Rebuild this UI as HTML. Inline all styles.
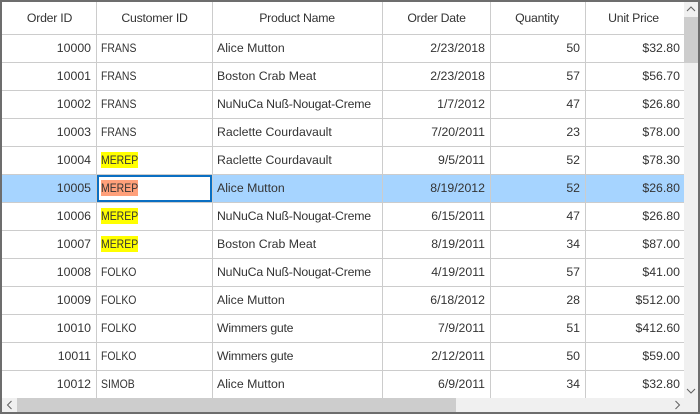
<!DOCTYPE html>
<html><head><meta charset="utf-8">
<style>
html,body{margin:0;padding:0;width:700px;height:414px;overflow:hidden;background:#fff}
#g{position:relative;width:700px;height:414px;font-family:"Liberation Sans",sans-serif;font-size:12.3px;color:#333;overflow:hidden}
#g div{position:absolute;white-space:nowrap}
.h{top:2px;height:32px;line-height:32px;text-align:center;letter-spacing:-.25px}
.l{left:2px;width:682px;height:1px;background:#cccccc}
.v{top:2px;width:1px;height:396px;background:#cccccc}
.r{height:27px;line-height:27px}
.a{text-align:right}
.c1{left:2px;width:89px}.c2{left:101px;transform:scaleX(.85);transform-origin:0 50%}.c3{left:217px}
.c4{left:383px;width:102px}.c5{left:491px;width:89px}.c6{left:586px;width:94px}
.n{letter-spacing:-.2px}.w{letter-spacing:-.25px}
.y{left:101px;width:37px;height:16px;background:#ffff00}
svg{position:absolute;left:0;top:0}
</style></head><body><div id="g">
<div style="left:2px;top:175px;width:682px;height:27px;background:#a6d4ff"></div>
<div class="l" style="top:34px"></div><div class="l" style="top:62px"></div><div class="l" style="top:90px"></div><div class="l" style="top:118px"></div><div class="l" style="top:146px"></div><div class="l" style="top:174px"></div><div class="l" style="top:202px"></div><div class="l" style="top:230px"></div><div class="l" style="top:258px"></div><div class="l" style="top:286px"></div><div class="l" style="top:314px"></div><div class="l" style="top:342px"></div><div class="l" style="top:370px"></div>
<div class="v" style="left:96px"></div><div class="v" style="left:212px"></div><div class="v" style="left:382px"></div><div class="v" style="left:490px"></div><div class="v" style="left:585px"></div>
<div style="left:97px;top:175px;width:111px;height:23px;border:2px solid #0a6fc2;background:#fff"></div>
<div class="y" style="top:152px"></div>
<div class="y" style="top:180px;background:#ffa07a"></div>
<div class="y" style="top:208px"></div>
<div class="y" style="top:236px"></div>

<div class="h" style="left:2px;width:95px">Order ID</div>
<div class="h" style="left:97px;width:115px">Customer ID</div>
<div class="h" style="left:213px;width:168px">Product Name</div>
<div class="h" style="left:383px;width:107px">Order Date</div>
<div class="h" style="left:491px;width:92px">Quantity</div>
<div class="h" style="left:586px;width:95px">Unit Price</div>

<div class="r a c1" style="top:35px">10000</div><div class="r c2" style="top:35px">FRANS</div><div class="r c3" style="top:35px">Alice Mutton</div><div class="r a c4" style="top:35px">2/23/2018</div><div class="r a c5" style="top:35px">50</div><div class="r a c6" style="top:35px">$32.80</div>
<div class="r a c1" style="top:63px">10001</div><div class="r c2" style="top:63px">FRANS</div><div class="r c3" style="top:63px">Boston Crab Meat</div><div class="r a c4" style="top:63px">2/23/2018</div><div class="r a c5" style="top:63px">57</div><div class="r a c6" style="top:63px">$56.70</div>
<div class="r a c1" style="top:91px">10002</div><div class="r c2" style="top:91px">FRANS</div><div class="r c3 n" style="top:91px">NuNuCa Nuß-Nougat-Creme</div><div class="r a c4" style="top:91px">1/7/2012</div><div class="r a c5" style="top:91px">47</div><div class="r a c6" style="top:91px">$26.80</div>
<div class="r a c1" style="top:119px">10003</div><div class="r c2" style="top:119px">FRANS</div><div class="r c3" style="top:119px">Raclette Courdavault</div><div class="r a c4" style="top:119px">7/20/2011</div><div class="r a c5" style="top:119px">23</div><div class="r a c6" style="top:119px">$78.00</div>
<div class="r a c1" style="top:147px">10004</div><div class="r c2" style="top:147px">MEREP</div><div class="r c3" style="top:147px">Raclette Courdavault</div><div class="r a c4" style="top:147px">9/5/2011</div><div class="r a c5" style="top:147px">52</div><div class="r a c6" style="top:147px">$78.30</div>
<div class="r a c1" style="top:175px">10005</div><div class="r c2" style="top:175px">MEREP</div><div class="r c3" style="top:175px">Alice Mutton</div><div class="r a c4" style="top:175px">8/19/2012</div><div class="r a c5" style="top:175px">52</div><div class="r a c6" style="top:175px">$26.80</div>
<div class="r a c1" style="top:203px">10006</div><div class="r c2" style="top:203px">MEREP</div><div class="r c3 n" style="top:203px">NuNuCa Nuß-Nougat-Creme</div><div class="r a c4" style="top:203px">6/15/2011</div><div class="r a c5" style="top:203px">47</div><div class="r a c6" style="top:203px">$26.80</div>
<div class="r a c1" style="top:231px">10007</div><div class="r c2" style="top:231px">MEREP</div><div class="r c3" style="top:231px">Boston Crab Meat</div><div class="r a c4" style="top:231px">8/19/2011</div><div class="r a c5" style="top:231px">34</div><div class="r a c6" style="top:231px">$87.00</div>
<div class="r a c1" style="top:259px">10008</div><div class="r c2" style="top:259px">FOLKO</div><div class="r c3 n" style="top:259px">NuNuCa Nuß-Nougat-Creme</div><div class="r a c4" style="top:259px">4/19/2011</div><div class="r a c5" style="top:259px">57</div><div class="r a c6" style="top:259px">$41.00</div>
<div class="r a c1" style="top:287px">10009</div><div class="r c2" style="top:287px">FOLKO</div><div class="r c3" style="top:287px">Alice Mutton</div><div class="r a c4" style="top:287px">6/18/2012</div><div class="r a c5" style="top:287px">28</div><div class="r a c6" style="top:287px">$512.00</div>
<div class="r a c1" style="top:315px">10010</div><div class="r c2" style="top:315px">FOLKO</div><div class="r c3 w" style="top:315px">Wimmers gute</div><div class="r a c4" style="top:315px">7/9/2011</div><div class="r a c5" style="top:315px">51</div><div class="r a c6" style="top:315px">$412.60</div>
<div class="r a c1" style="top:343px">10011</div><div class="r c2" style="top:343px">FOLKO</div><div class="r c3 w" style="top:343px">Wimmers gute</div><div class="r a c4" style="top:343px">2/12/2011</div><div class="r a c5" style="top:343px">50</div><div class="r a c6" style="top:343px">$59.00</div>
<div class="r a c1" style="top:371px">10012</div><div class="r c2" style="top:371px">SIMOB</div><div class="r c3" style="top:371px">Alice Mutton</div><div class="r a c4" style="top:371px">6/9/2011</div><div class="r a c5" style="top:371px">34</div><div class="r a c6" style="top:371px">$32.80</div>

<div style="left:684px;top:2px;width:14px;height:410px;background:#f0f0f0"></div>
<div style="left:684px;top:17px;width:14px;height:46px;background:#cdcdcd"></div>
<div style="left:2px;top:398px;width:682px;height:14px;background:#f0f0f0"></div>
<div style="left:17px;top:398px;width:439px;height:14px;background:#cdcdcd"></div>
<div style="left:0;top:0;width:696px;height:410px;border:2px solid #6d6d6d"></div>
<svg width="700" height="414" fill="none" stroke="#606060" stroke-width="1">
<path d="M687 11L691 7L695 11"/>
<path d="M687 389L691 393L695 389"/>
<path d="M11.5 401L7.5 405L11.5 409"/>
<path d="M675.5 401L679.5 405L675.5 409"/>
</svg>
</div></body></html>
